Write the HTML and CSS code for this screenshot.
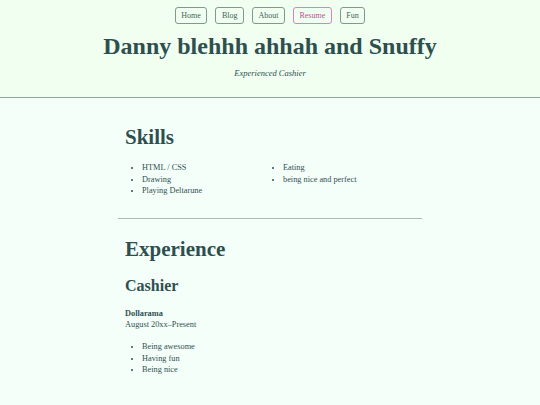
FILE: index.html
```html
<!DOCTYPE html>
<html>
<head>
<meta charset="utf-8">
<link rel="stylesheet" href="styles.css">
</head>
<body>
<header class="site-header">
  <nav class="nav">
    <a class="nav-btn" href="#">Home</a>
    <a class="nav-btn" href="#">Blog</a>
    <a class="nav-btn" href="#">About</a>
    <a class="nav-btn active" href="#">Resume</a>
    <a class="nav-btn" href="#">Fun</a>
  </nav>
  <h1 class="title">Danny blehhh ahhah and Snuffy</h1>
  <p class="subtitle">Experienced Cashier</p>
</header>
<main class="main">
  <section class="section">
    <h2 class="sec-title">Skills</h2>
    <ul class="list skills">
      <li>HTML / CSS</li>
      <li>Drawing</li>
      <li>Playing Deltarune</li>
      <li>Eating</li>
      <li>being nice and perfect</li>
    </ul>
  </section>
  <hr class="rule">
  <section class="section">
    <h2 class="sec-title exp">Experience</h2>
    <h3 class="job-title">Cashier</h3>
    <p class="company">Dollarama</p>
    <p class="dates">August 20xx–Present</p>
    <ul class="list duties">
      <li>Being awesome</li>
      <li>Having fun</li>
      <li>Being nice</li>
    </ul>
  </section>
</main>
</body>
</html>
```
FILE: styles.css
```css
html, body {
  margin: 0;
  padding: 0;
}
body {
  background: #f5fffa;
  color: #2f4f4f;
  font-family: "Liberation Serif", "Times New Roman", serif;
}
.site-header {
  background: #f0fff0;
  border-bottom: 1px solid #8fa89a;
  padding: 7px 0 19px;
  text-align: center;
}
.nav {
  display: flex;
  justify-content: center;
  gap: 8px;
}
.nav-btn {
  display: block;
  font-size: 8px;
  line-height: 9px;
  padding: 3px 5.5px;
  border: 1px solid #7f9a8c;
  border-radius: 3px;
  color: #3f5f5a;
  text-decoration: none;
}
.nav-btn.active {
  border-color: #d783be;
  color: #c04d9c;
}
.title {
  margin: 10px 0 0;
  font-size: 24px;
  line-height: 24px;
  font-weight: bold;
}
.subtitle {
  margin: 10px 0 0;
  font-size: 8.5px;
  line-height: 10px;
  font-style: italic;
}
.main {
  width: 304px;
  margin: 0 auto;
  padding-top: 27px;
}
.section {
  padding: 0 7px;
}
.sec-title {
  margin: 0;
  font-size: 21px;
  line-height: 24px;
  font-weight: bold;
}
.sec-title.exp {
  margin-top: 18px;
}
.list {
  margin: 13px 0 0;
  padding-left: 17px;
  font-size: 8.3px;
  line-height: 11.6px;
}
.skills {
  column-count: 2;
  column-gap: 9px;
}
.rule {
  border: 0;
  border-top: 1px solid #a8bcb4;
  margin: 21px 0 0;
}
.job-title {
  margin: 15px 0 0;
  font-size: 16px;
  line-height: 20px;
  font-weight: bold;
}
.company {
  margin: 12px 0 0;
  font-size: 8.3px;
  line-height: 11.6px;
  font-weight: bold;
}
.dates {
  margin: 0;
  font-size: 8.3px;
  line-height: 11.6px;
}
.duties {
  margin-top: 10px;
}
```
